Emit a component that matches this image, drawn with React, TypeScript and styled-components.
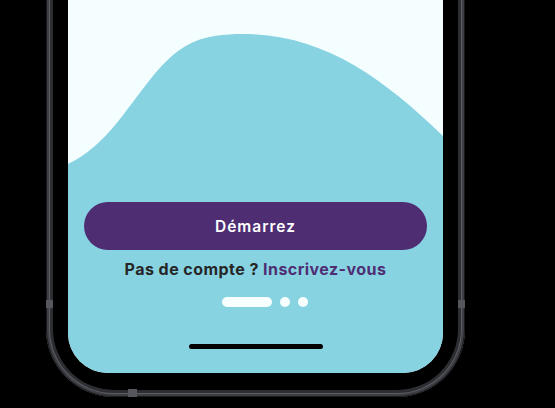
import React from "react";
import styled, { createGlobalStyle } from "styled-components";

const Global = createGlobalStyle`
  html, body { margin: 0; padding: 0; background: #000; }
  body { width: 555px; height: 408px; overflow: hidden; }
  * { box-sizing: border-box; }
`;

const Stage = styled.div`
  width: 555px;
  height: 408px;
  overflow: hidden;
  display: flex;
  align-items: flex-end;
  padding: 0 0 11px 46px;
  background: #000;
`;

const Rim = styled.div`
  position: relative;
  flex: none;
  width: 419px;
  height: 900px;
  border-radius: 68px;
  padding: 7px;
  background: #2c2e32;
  box-shadow: inset 0 0 0 1px #1a1b1e, inset 0 0 0 3px #3d3f44, inset 0 0 0 4px #5b5d62;
`;

const Antenna = styled.span<{ $side: "left" | "right" | "bottom"; $at: number }>`
  position: absolute;
  background: #55575c;
  ${(p) =>
    p.$side === "bottom"
      ? `bottom: 0; left: ${p.$at}px; width: 9px; height: 8px;`
      : `${p.$side}: 0; bottom: ${p.$at}px; width: 7px; height: 8px;`}
`;

const Bezel = styled.div`
  width: 100%;
  height: 100%;
  border-radius: 61px;
  background: #000;
  padding: 15px 15px 17px 15px;
`;

const Screen = styled.div`
  position: relative;
  width: 375px;
  height: 100%;
  border-radius: 40px;
  overflow: hidden;
  background: #f4feff;
  display: flex;
  flex-direction: column;
  justify-content: flex-end;
  align-items: center;
  padding: 0 16px 24px;
  font-family: Inter, "Liberation Sans", sans-serif;
`;

const Wave = styled.svg`
  position: absolute;
  left: 0;
  bottom: 0;
  width: 375px;
  height: 373px;
`;

const StartButton = styled.button`
  position: relative;
  width: 343px;
  height: 48px;
  border: none;
  border-radius: 24px;
  background: #4e2d73;
  color: #ffffff;
  font-family: inherit;
  font-size: 15.5px;
  font-weight: 600;
  letter-spacing: 1px;
  cursor: pointer;
`;

const SignupLine = styled.p`
  position: relative;
  margin: 8px 0 0;
  line-height: 22px;
  font-size: 16px;
  font-weight: 700;
  color: #262626;
  letter-spacing: 0.45px;
`;

const SignupLink = styled.a`
  color: #4e2d73;
  text-decoration: none;
`;

const Pager = styled.div`
  position: relative;
  display: flex;
  gap: 8px;
  margin: 17px 0 0 19px;
  height: 10px;
`;

const Dot = styled.span<{ $active?: boolean }>`
  width: ${(p) => (p.$active ? 50 : 10)}px;
  height: 10px;
  border-radius: 5px;
  background: #f7ffff;
`;

const HomeIndicator = styled.div`
  position: relative;
  margin-top: 37px;
  width: 134px;
  height: 5px;
  border-radius: 3px;
  background: #000;
`;

const WAVE =
  "M0,164 C40,145 60,105 90,70 C115,42 135,34 175,34 C255,34 315,78 375,136 L375,373 L0,373 Z";

export default function App() {
  return (
    <>
      <Global />
      <Stage>
        <Rim>
          <Antenna $side="left" $at={89} />
          <Antenna $side="right" $at={89} />
          <Antenna $side="bottom" $at={82} />
          <Bezel>
            <Screen>
              <Wave viewBox="0 0 375 373" aria-hidden="true">
                <path d={WAVE} fill="#87d3e2" />
              </Wave>
              <StartButton>Démarrez</StartButton>
              <SignupLine>
                Pas de compte ? <SignupLink href="#">Inscrivez-vous</SignupLink>
              </SignupLine>
              <Pager>
                <Dot $active />
                <Dot />
                <Dot />
              </Pager>
              <HomeIndicator />
            </Screen>
          </Bezel>
        </Rim>
      </Stage>
    </>
  );
}
